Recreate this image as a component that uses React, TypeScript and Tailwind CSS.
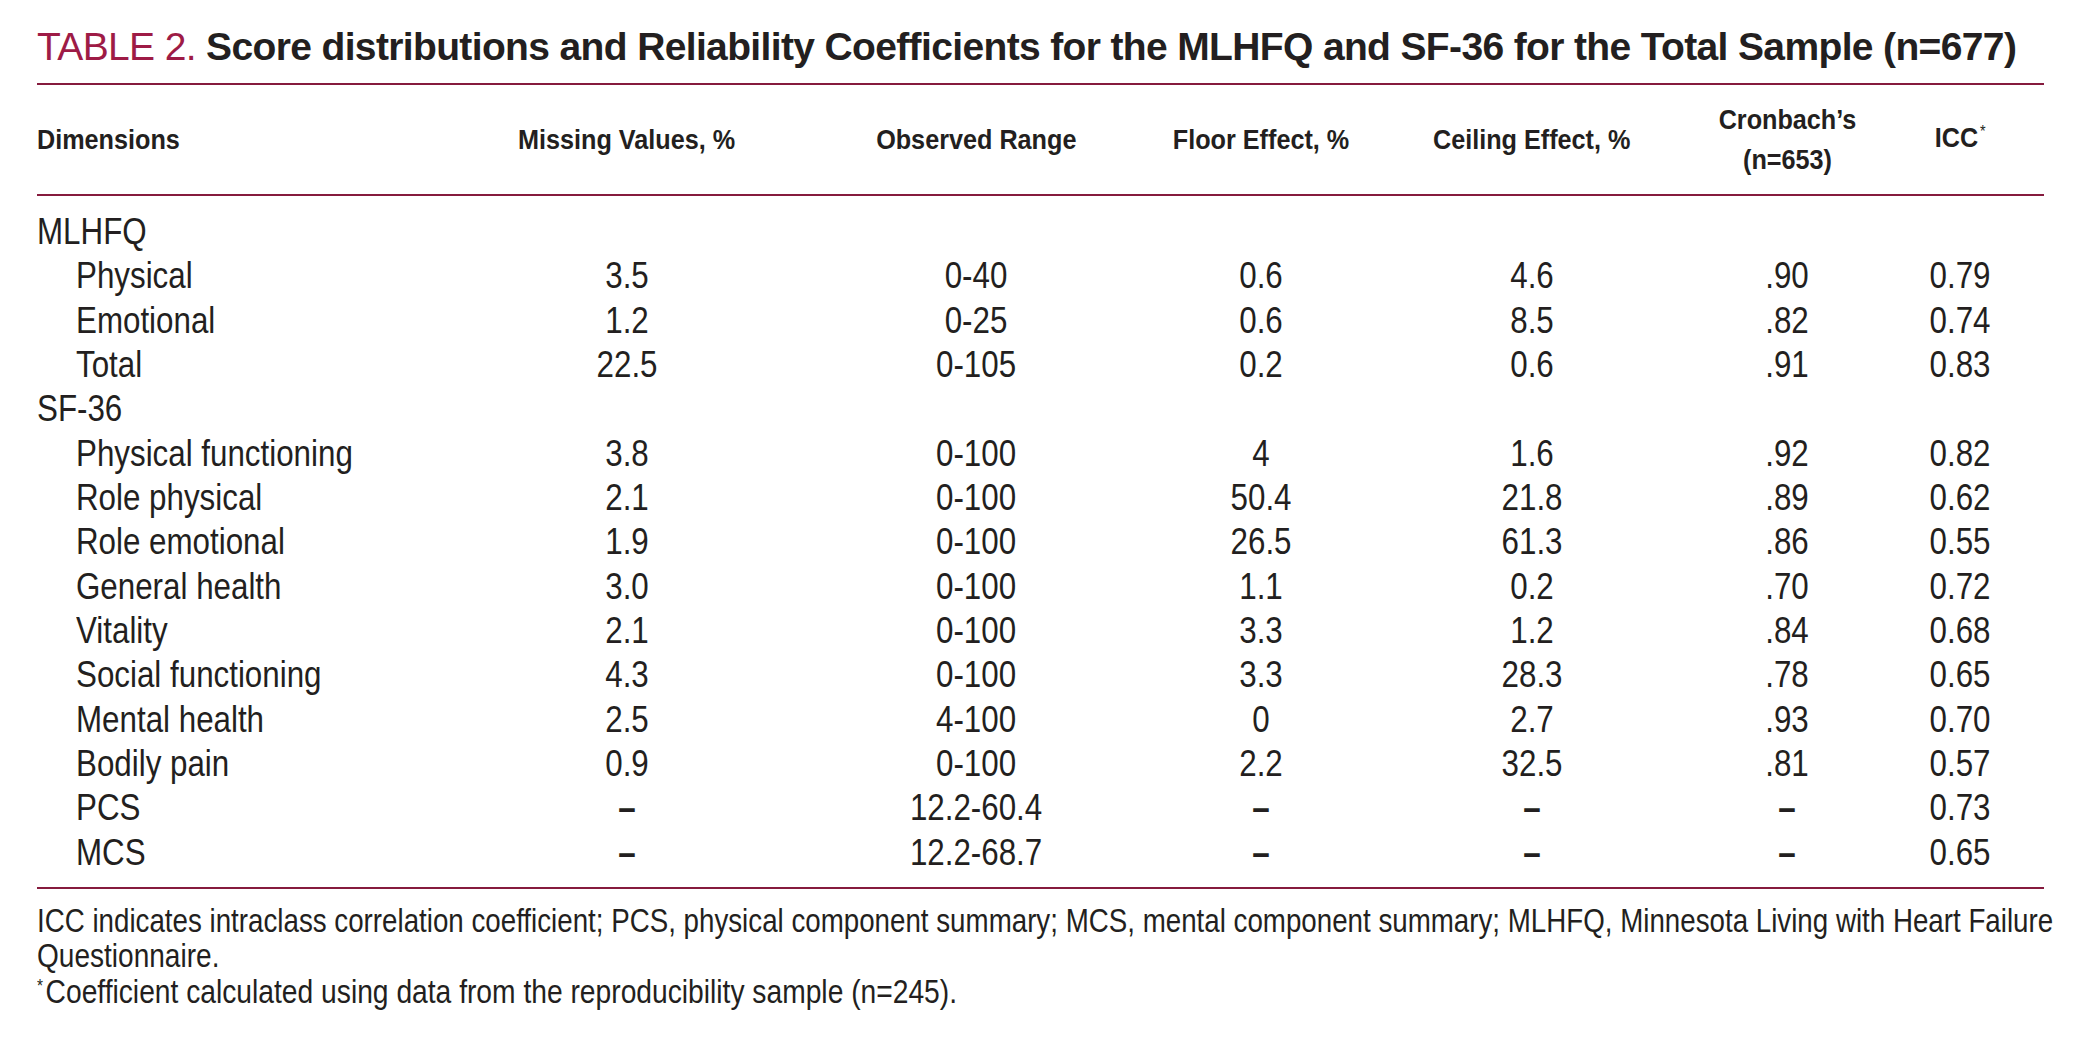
import React from "react";

type Row = { label: string; indent?: boolean; v?: string[] };

const rows: Row[] = [
  { label: "MLHFQ" },
  { label: "Physical", indent: true, v: ["3.5", "0-40", "0.6", "4.6", ".90", "0.79"] },
  { label: "Emotional", indent: true, v: ["1.2", "0-25", "0.6", "8.5", ".82", "0.74"] },
  { label: "Total", indent: true, v: ["22.5", "0-105", "0.2", "0.6", ".91", "0.83"] },
  { label: "SF-36" },
  { label: "Physical functioning", indent: true, v: ["3.8", "0-100", "4", "1.6", ".92", "0.82"] },
  { label: "Role physical", indent: true, v: ["2.1", "0-100", "50.4", "21.8", ".89", "0.62"] },
  { label: "Role emotional", indent: true, v: ["1.9", "0-100", "26.5", "61.3", ".86", "0.55"] },
  { label: "General health", indent: true, v: ["3.0", "0-100", "1.1", "0.2", ".70", "0.72"] },
  { label: "Vitality", indent: true, v: ["2.1", "0-100", "3.3", "1.2", ".84", "0.68"] },
  { label: "Social functioning", indent: true, v: ["4.3", "0-100", "3.3", "28.3", ".78", "0.65"] },
  { label: "Mental health", indent: true, v: ["2.5", "4-100", "0", "2.7", ".93", "0.70"] },
  { label: "Bodily pain", indent: true, v: ["0.9", "0-100", "2.2", "32.5", ".81", "0.57"] },
  { label: "PCS", indent: true, v: ["–", "12.2-60.4", "–", "–", "–", "0.73"] },
  { label: "MCS", indent: true, v: ["–", "12.2-68.7", "–", "–", "–", "0.65"] },
];

const cols = "grid grid-cols-[421px_338px_360px_210px_332px_178px_168px]";
const font = "font-['Liberation_Sans',Arial,sans-serif]";

function HeadCell({ children, left }: { children: React.ReactNode; left?: boolean }) {
  return (
    <div className={left ? "text-left" : "text-center"}>
      <span className={`inline-block whitespace-nowrap scale-x-[0.9] ${left ? "origin-left" : "origin-center"}`}>
        {children}
      </span>
    </div>
  );
}

export default function App() {
  return (
    <div className={`min-h-screen w-full overflow-hidden bg-white text-[#231f20] ${font}`}>
      <div className="ml-[37px] w-[2007px] pt-[25px]">
        <h1 className="whitespace-nowrap text-[39px] font-bold leading-[44px] tracking-[-0.64px]">
          <span className="font-normal text-[#9e1b46]">TABLE 2.</span> Score distributions and Reliability Coefficients for the MLHFQ and SF-36 for the Total Sample (n=677)
        </h1>
        <div className="mt-[14px] h-[2px] bg-[#861b3e]" />
        <div className={`${cols} h-[109px] items-center text-[28px] font-bold leading-[40px]`}>
          <HeadCell left>Dimensions</HeadCell>
          <HeadCell>Missing Values, %</HeadCell>
          <HeadCell>Observed Range</HeadCell>
          <HeadCell>Floor Effect, %</HeadCell>
          <HeadCell>Ceiling Effect, %</HeadCell>
          <HeadCell>
            Cronbach’s
            <br />
            (n=653)
          </HeadCell>
          <HeadCell>
            ICC<span className="relative -top-[10px] ml-[2px] text-[16px] font-normal">*</span>
          </HeadCell>
        </div>
        <div className="h-[2px] bg-[#861b3e]" />
        <div className="pb-[12px] pt-[14px] text-[36px] leading-[44.33px]">
          {rows.map((r) => (
            <div key={r.label} className={`${cols} h-[44.33px]`}>
              <div className={r.indent ? "pl-[39px]" : ""}>
                <span className="inline-block origin-left scale-x-[0.87] whitespace-nowrap">{r.label}</span>
              </div>
              {(r.v ?? ["", "", "", "", "", ""]).map((val, i) => (
                <div key={i} className="text-center">
                  <span
                    className={`inline-block origin-center scale-x-[0.87] whitespace-nowrap ${val === "–" ? "font-bold" : ""}`}
                  >
                    {val}
                  </span>
                </div>
              ))}
            </div>
          ))}
        </div>
        <div className="h-[2px] bg-[#861b3e]" />
        <div className="mt-[14px] text-[33px] leading-[35.5px]">
          <div>
            <span className="inline-block origin-left scale-x-[0.84] whitespace-nowrap">
              ICC indicates intraclass correlation coefficient; PCS, physical component summary; MCS, mental component summary; MLHFQ, Minnesota Living with Heart Failure
            </span>
          </div>
          <div>
            <span className="inline-block origin-left scale-x-[0.85] whitespace-nowrap">Questionnaire.</span>
          </div>
          <div>
            <span className="inline-block origin-left scale-x-[0.855] whitespace-nowrap">
              <span className="relative -top-[11px] mr-[3px] text-[18px]">*</span>Coefficient calculated using data from the reproducibility sample (n=245).
            </span>
          </div>
        </div>
      </div>
    </div>
  );
}
